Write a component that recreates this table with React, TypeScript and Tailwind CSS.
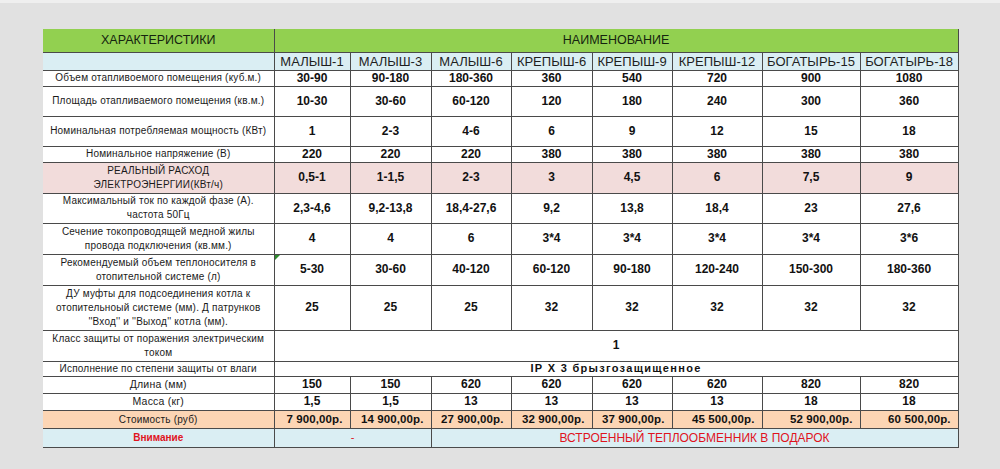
import React from 'react';

const models = ['МАЛЫШ-1', 'МАЛЫШ-3', 'МАЛЫШ-6', 'КРЕПЫШ-6', 'КРЕПЫШ-9', 'КРЕПЫШ-12', 'БОГАТЫРЬ-15', 'БОГАТЫРЬ-18'];
const widths = [231, 76, 81, 80, 81, 80, 90, 98, 98];

type Row = {
  label: React.ReactNode;
  values: string[];
  h: number;
  bg?: string;
};

const rows: Row[] = [
  { label: 'Объем отапливоемого помещения (куб.м.)', values: ['30-90', '90-180', '180-360', '360', '540', '720', '900', '1080'], h: 16 },
  { label: 'Площадь отапливаемого помещения (кв.м.)', values: ['10-30', '30-60', '60-120', '120', '180', '240', '300', '360'], h: 30 },
  { label: 'Номинальная потребляемая мощность (КВт)', values: ['1', '2-3', '4-6', '6', '9', '12', '15', '18'], h: 30 },
  { label: 'Номинальное напряжение (В)', values: ['220', '220', '220', '380', '380', '380', '380', '380'], h: 16 },
  {
    label: (
      <>
        РЕАЛЬНЫЙ РАСХОД
        <br />
        ЭЛЕКТРОЭНЕРГИИ(КВт/ч)
      </>
    ),
    values: ['0,5-1', '1-1,5', '2-3', '3', '4,5', '6', '7,5', '9'],
    h: 31,
    bg: 'bg-[#f2dcdb]',
  },
  {
    label: (
      <>
        Максимальный ток по каждой фазе (А).
        <br />
        частота 50Гц
      </>
    ),
    values: ['2,3-4,6', '9,2-13,8', '18,4-27,6', '9,2', '13,8', '18,4', '23', '27,6'],
    h: 30,
  },
  {
    label: (
      <>
        Сечение токопроводящей медной жилы
        <br />
        провода подключения (кв.мм.)
      </>
    ),
    values: ['4', '4', '6', '3*4', '3*4', '3*4', '3*4', '3*6'],
    h: 31,
  },
  {
    label: (
      <>
        Рекомендуемый объем теплоносителя в
        <br />
        отопительной системе (л)
      </>
    ),
    values: ['5-30', '30-60', '40-120', '60-120', '90-180', '120-240', '150-300', '180-360'],
    h: 31,
  },
  {
    label: (
      <>
        ДУ муфты для подсоединения котла к
        <br />
        отопительноый системе (мм). Д патрунков
        <br />
        ''Вход'' и ''Выход'' котла (мм).
      </>
    ),
    values: ['25', '25', '25', '32', '32', '32', '32', '32'],
    h: 45,
  },
];

const tail: Row[] = [
  { label: 'Длина (мм)', values: ['150', '150', '620', '620', '620', '620', '820', '820'], h: 17 },
  { label: 'Масса (кг)', values: ['1,5', '1,5', '13', '13', '13', '13', '18', '18'], h: 17 },
];

const prices = ['7 900,00р.', '14 900,00р.', '27 900,00р.', '32 900,00р.', '37 900,00р.', '45 500,00р.', '52 900,00р.', '60 500,00р.'];

const cell = 'border-r border-b border-[#4a4a4a] p-0';
const labelCls = 'text-[10px] leading-[14px] text-[#1a1a1a] text-center tracking-[0.2px]';
const valueCls = 'text-[12px] leading-[13px] font-bold text-[#111] text-center';

export default function App() {
  return (
    <div
      className="w-[1000px] h-[469px] bg-[#e1e1e1] border-t-[3px] border-[#efefef] pt-[26px] pl-[43px]"
      style={{ fontFamily: '"Liberation Sans", Arial, sans-serif' }}
    >
      <table className="border-collapse table-fixed w-[915px]">
        <colgroup>
          {widths.map((w, i) => (
            <col key={i} style={{ width: w }} />
          ))}
        </colgroup>
        <tbody>
          <tr className="h-[23px] bg-[#92d050]">
            <td className="border-r border-b border-[#4a4a4a] text-center text-[12.5px] leading-[14px] text-[#15240f] p-0">
              ХАРАКТЕРИСТИКИ
            </td>
            <td colSpan={8} className="border-r border-b border-[#4a4a4a] text-center text-[12.5px] leading-[14px] text-[#15240f] p-0">
              НАИМЕНОВАНИЕ
            </td>
          </tr>
          <tr className="h-[18px] bg-[#daeef3]">
            <td className="border-r border-b border-[#4a4a4a] p-0" />
            {models.map((m) => (
              <td key={m} className={`${cell} text-center text-[13px] leading-[15px] text-[#1e1e1e] whitespace-nowrap`}>
                {m}
              </td>
            ))}
          </tr>
          {rows.map((r, i) => (
            <tr key={i} className={r.bg ?? 'bg-white'} style={{ height: r.h }}>
              <td className={`${cell} ${labelCls}`}>{r.label}</td>
              {r.values.map((v, j) => (
                <td key={j} className={`${cell} ${valueCls} relative`}>
                  {i === 7 && j === 0 && (
                    <span className="absolute left-0 top-0 w-0 h-0 border-t-[5px] border-r-[5px] border-t-[#2e8b2e] border-r-transparent" />
                  )}
                  {v}
                </td>
              ))}
            </tr>
          ))}
          <tr className="bg-white h-[31px]">
            <td className={`${cell} ${labelCls}`}>
              Класс защиты от поражения электрическим
              <br />
              током
            </td>
            <td colSpan={8} className={`${cell} ${valueCls}`}>
              1
            </td>
          </tr>
          <tr className="bg-white h-[15px]">
            <td className={`${cell} ${labelCls}`}>Исполнение по степени защиты от влаги</td>
            <td colSpan={8} className={`${cell} text-[11px] leading-[13px] font-bold text-[#111] text-center tracking-[1.3px]`}>
              IP X 3 брызгозащищенное
            </td>
          </tr>
          {tail.map((r, i) => (
            <tr key={i} className="bg-white" style={{ height: r.h }}>
              <td className={`${cell} text-[10.5px] leading-[13px] text-[#1a1a1a] text-center tracking-[0.2px]`}>{r.label}</td>
              {r.values.map((v, j) => (
                <td key={j} className={`${cell} ${valueCls}`}>
                  {v}
                </td>
              ))}
            </tr>
          ))}
          <tr className="bg-[#fcd5b4] h-[18px]">
            <td className={`${cell} text-[10px] leading-[13px] text-[#1a1a1a] text-center tracking-[0.2px]`}>Стоимость (руб)</td>
            {prices.map((p, j) => (
              <td key={j} className={`${cell} text-[11.5px] leading-[13px] font-bold text-[#111] text-right pr-[7px] whitespace-nowrap tracking-[0.1px]`}>
                {p}
              </td>
            ))}
          </tr>
          <tr className="bg-[#daeef3] h-[19px]">
            <td className={`${cell} text-[10px] leading-[13px] font-bold text-[#e0141e] text-center`}>Внимание</td>
            <td colSpan={2} className={`${cell} text-[11px] leading-[13px] text-[#e0141e] text-center`}>
              -
            </td>
            <td colSpan={6} className={`${cell} text-[12px] leading-[16px] text-[#e0141e] text-center`}>
              ВСТРОЕННЫЙ ТЕПЛООБМЕННИК В ПОДАРОК
            </td>
          </tr>
        </tbody>
      </table>
    </div>
  );
}
